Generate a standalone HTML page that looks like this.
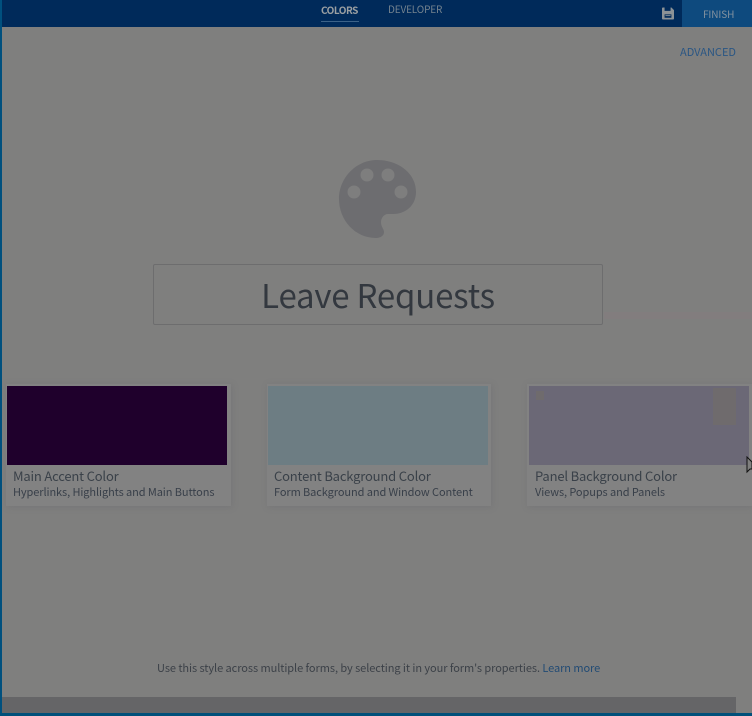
<!DOCTYPE html>
<html>
<head>
<meta charset="utf-8">
<style>
html,body{margin:0;padding:0;width:752px;height:716px;overflow:hidden;background:#7f7f7e;font-family:"Noto Sans CJK JP","Liberation Sans",sans-serif}
.a{position:absolute;white-space:nowrap}
#frameL{left:0;top:0;width:2px;height:716px;background:#00507e}
#frameB{left:0;top:713px;width:752px;height:3px;background:#00507a}
#top{left:0;top:0;width:752px;height:27px;background:#002a5a}
#finish{left:682px;top:0;width:70px;height:27px;background:#0e4a7e}
.nav{font-size:10px;line-height:12px}
.card{background:#828282;box-shadow:1px 1px 6px rgba(95,95,105,.3);height:122px;top:384px}
.sw{top:386px;width:220px;height:79px}
.t1{font-size:13px;color:#3a4149;line-height:14px;top:469px;letter-spacing:-.18px}
.t2{font-size:11px;color:#383f49;line-height:13px;top:486px;letter-spacing:-.09px}
</style>
</head>
<body>
<div class="a" id="top"></div>
<div class="a" id="finish"></div>
<div class="a" id="frameL"></div>
<div class="a" id="frameB"></div>

<div class="a nav" style="left:321px;top:4px;color:#9a9fa2;font-weight:bold;letter-spacing:-.5px">COLORS</div>
<div class="a" style="left:321px;top:21px;width:38px;height:1px;background:#3c6288"></div>
<div class="a nav" style="left:388px;top:3px;color:#74838f;letter-spacing:-.15px">DEVELOPER</div>
<svg class="a" style="left:662px;top:7px" width="12" height="13" viewBox="0 0 14 14"><path fill="#8c9296" fill-rule="evenodd" d="M1 0h2v4h7V0h1l3 3v10a1 1 0 0 1-1 1H1a1 1 0 0 1-1-1V1a1 1 0 0 1 1-1zM3 8v4h8V8z"/><rect x="4" y="9" width="6" height="1" fill="#8c9296"/></svg>
<div class="a nav" style="left:703px;top:8px;color:#84929f;letter-spacing:-.1px">FINISH</div>
<div class="a" style="left:680px;top:46px;font-size:11px;line-height:12px;color:#2a5684">ADVANCED</div>

<svg class="a" style="left:338px;top:160px" width="79" height="79" viewBox="0 0 79 79">
<path fill="#6d6d70" d="M39 0C60 0 78 13 78 32C78 45 68 54 55 54H50C46 54 43 58 43 62C43 67 46 69 46 72C46 76 42 78 38 78C17 78 1 60 1 39C1 18 18 0 39 0Z"/>
<circle cx="29" cy="15" r="6.5" fill="#7e7e7e"/><circle cx="50" cy="15" r="6.5" fill="#7e7e7e"/><circle cx="16" cy="32" r="6.5" fill="#7e7e7e"/><circle cx="63" cy="32" r="6.5" fill="#7e7e7e"/>
</svg>

<div class="a" style="left:153px;top:264px;width:448px;height:59px;border:1px solid #6d6d6e;border-radius:2px"></div>
<div class="a" style="left:153px;top:274px;width:450px;text-align:center;font-size:33px;line-height:40px;color:#33383f;letter-spacing:-.2px">Leave Requests</div>
<div class="a" style="left:604px;top:312px;width:148px;height:7px;background:#827d7e"></div>

<div class="a card" style="left:6px;width:225px"></div>
<div class="a sw" style="left:7px;background:#1f002c"></div>
<div class="a t1" style="left:13px">Main Accent Color</div>
<div class="a t2" style="left:13px">Hyperlinks, Highlights and Main Buttons</div>

<div class="a card" style="left:267px;width:224px"></div>
<div class="a sw" style="left:268px;background:#6d7d83"></div>
<div class="a t1" style="left:274px">Content Background Color</div>
<div class="a t2" style="left:274px">Form Background and Window Content</div>

<div class="a card" style="left:527px;width:225px"></div>
<div class="a sw" style="left:529px;background:#6b6876"></div>
<div class="a" style="left:713px;top:388px;width:23px;height:37px;background:#6f6b6d"></div>
<div class="a" style="left:536px;top:391px;width:8px;height:9px;background:#6f6b6d"></div>
<div class="a t1" style="left:535px">Panel Background Color</div>
<div class="a t2" style="left:535px">Views, Popups and Panels</div>

<svg class="a" style="left:746px;top:456px" width="6" height="18" viewBox="0 0 6 18"><path d="M1 1V16L4 13L6 13V6Z" fill="#7f7f7e" stroke="#111" stroke-width="1"/></svg>

<div class="a" style="left:157px;top:661px;font-size:11px;line-height:14px;color:#3c4148;letter-spacing:-.065px">Use this style across multiple forms, by selecting it in your form's properties. <span style="color:#224b74">Learn more</span></div>

<div class="a" style="left:2px;top:697px;width:734px;height:16px;background:#656567"></div>
</body>
</html>
